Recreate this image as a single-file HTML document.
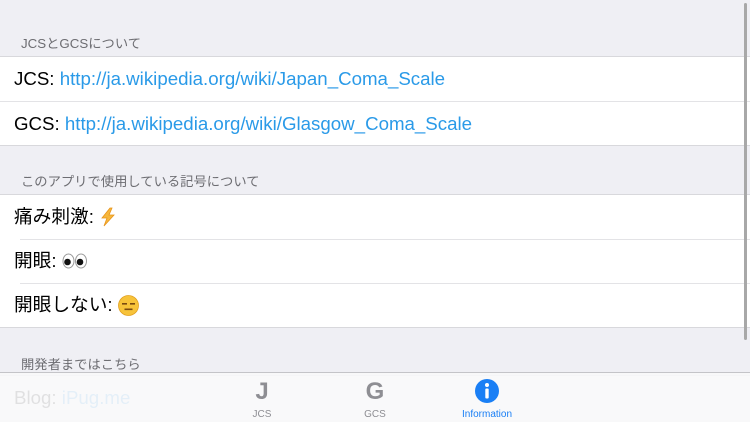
<!DOCTYPE html>
<html><head><meta charset="utf-8"><style>
*{margin:0;padding:0;box-sizing:border-box}
body{width:750px;height:422px;overflow:hidden;background:#efeff4;font-family:"Liberation Sans","Noto Sans CJK JP",sans-serif;position:relative}
.h{position:absolute;left:21px;font-size:13.3px;color:#6d6d72}
.g{position:absolute;left:0;width:750px;background:#fff;border-top:1px solid #d8d8dc;border-bottom:1px solid #d8d8dc}
.r{height:44px;line-height:44px;padding-left:14px;font-size:18.7px;color:#000;position:relative;display:flex;align-items:center}
.r+.r{border-top:1px solid #e3e3e6}
.g2 .r+.r{border-top:none}
.g2 .r+.r:before{content:"";position:absolute;left:20px;right:0;top:0;border-top:1px solid #e3e3e6}
a{color:#2a9ae8;text-decoration:none}
.tab{position:absolute;left:0;top:372px;width:750px;height:50px;background:rgba(248,248,249,0.9);border-top:1px solid #c4c4c8}
.t{position:absolute;top:0;width:80px;text-align:center;font-size:10px;color:#8e8e93}
.t b{display:block;font-size:24px;font-weight:bold;color:#8e8e93;height:36px;line-height:38px}
.sb{position:absolute;left:744px;top:3px;width:3px;height:337px;background:#a8a8a8;border-radius:2px}
</style></head><body>
<div class="h" style="top:33px">JCSとGCSについて</div>
<div class="g" style="top:56px">
<div class="r">JCS:&nbsp;<a>http://ja.wikipedia.org/wiki/Japan_Coma_Scale</a></div>
<div class="r">GCS:&nbsp;<a>http://ja.wikipedia.org/wiki/Glasgow_Coma_Scale</a></div>
</div>
<div class="h" style="top:171px">このアプリで使用している記号について</div>
<div class="g g2" style="top:194px">
<div class="r">痛み刺激:&nbsp;<svg width="18" height="20" viewBox="0 0 18 20"><path d="M11 1 L3 11 H8 L5 19 L15 8 H10 L13 1Z" fill="#f6b73c" stroke="#e8941a" stroke-width="0.8"/></svg></div>
<div class="r">開眼:&nbsp;<svg width="26" height="16" viewBox="0 0 26 16"><ellipse cx="6.5" cy="8" rx="5.5" ry="7" fill="#fff" stroke="#999"/><ellipse cx="19" cy="8" rx="5.5" ry="7" fill="#fff" stroke="#999"/><circle cx="5.5" cy="9" r="3.3" fill="#111"/><circle cx="18" cy="9" r="3.3" fill="#111"/></svg></div>
<div class="r">開眼しない:&nbsp;<svg width="21" height="21" viewBox="0 0 21 21"><circle cx="10.5" cy="10.5" r="10" fill="#f7c33a" stroke="#e2a020" stroke-width="0.8"/><rect x="4" y="8" width="5" height="1.6" fill="#7a4a10"/><rect x="12" y="8" width="5" height="1.6" fill="#7a4a10"/><rect x="6.5" y="13.5" width="8" height="1.6" fill="#7a4a10"/></svg></div>
</div>
<div class="h" style="top:354px">開発者まではこちら</div>
<div class="g" style="top:375px;border-bottom:none">
<div class="r">Blog:&nbsp;<a>iPug.me</a></div>
</div>
<div class="tab">
<div class="t" style="left:222px"><b>J</b>JCS</div>
<div class="t" style="left:335px"><b>G</b>GCS</div>
<div class="t" style="left:447px;color:#1a7ff5"><svg width="26" height="26" viewBox="0 0 26 26" style="display:block;margin:5px auto 5px"><circle cx="13" cy="13" r="12" fill="#1a7ff5"/><circle cx="13" cy="7" r="2" fill="#fff"/><rect x="11.3" y="10.5" width="3.4" height="10" rx="1" fill="#fff"/></svg>Information</div>
</div>
<div class="sb"></div>
</body></html>
